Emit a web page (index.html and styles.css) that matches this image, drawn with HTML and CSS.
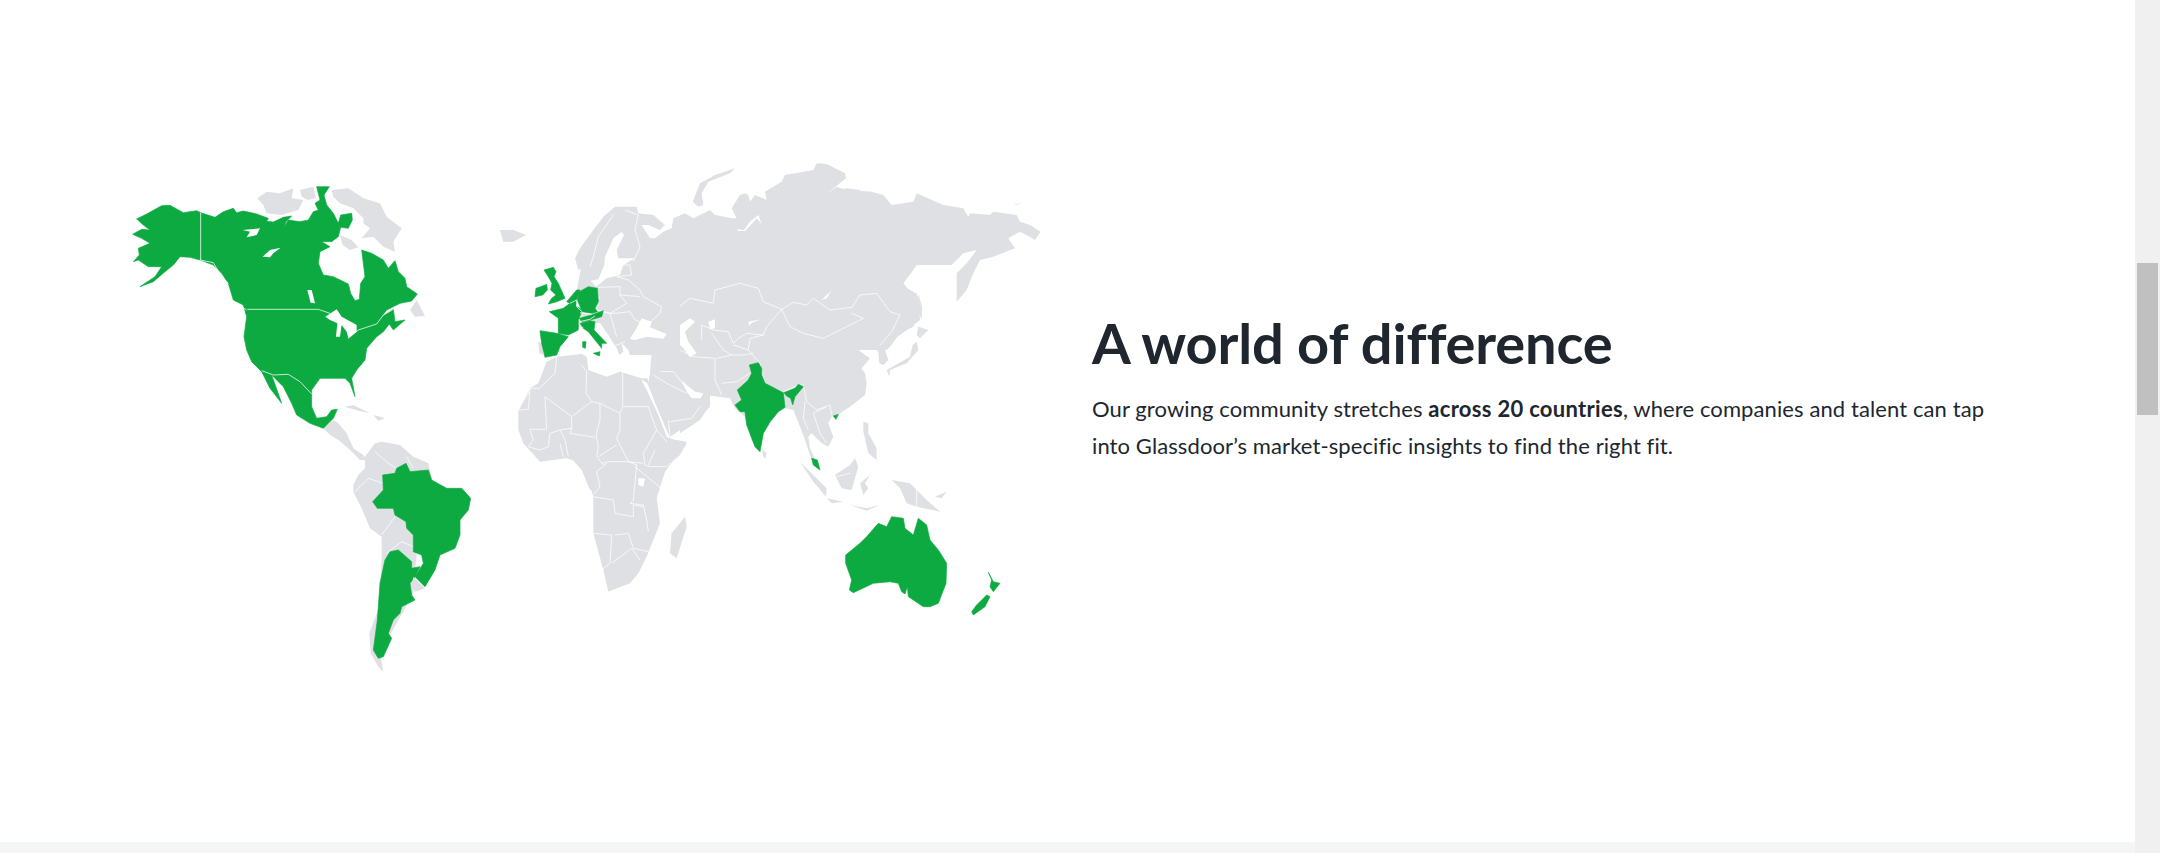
FILE: index.html
```html
<!DOCTYPE html>
<html lang="en">
<head>
<meta charset="utf-8">
<title>A world of difference</title>
<link rel="stylesheet" href="styles.css">
</head>
<body>
<div class="page">
  <main class="content">
    <section class="hero">
      <svg class="map" viewBox="120 150 940 540" role="img" aria-label="World map">
        <!-- Base land -->
        <g transform="translate(100 140) scale(.33333)">
          <path class="land" d="M472 175L500 155 540 160 580 145 575 175 610 180 595 210 545 225 500 220 490 195Z"/>
          <path class="land" d="M600 150L640 140 648 175 625 180 605 170Z"/>
          <path class="land" d="M695 150L745 145 790 175 840 190 860 230 905 265 880 305 885 335 850 320 820 290 785 295 810 265 790 250 790 235 760 205 720 190 700 170Z"/>
          <path class="land" d="M720 285L755 300 775 322 750 330 728 315Z"/>
          <path class="land" d="M930 510L950 480 975 528 945 530Z"/>
          <path class="land" d="M1200 270L1240 270 1278 285 1240 305 1210 305Z"/>
          <path class="land" d="M670 865L700 840 715 850 740 880 760 925 790 945 800 960 780 960 745 925 715 900 690 885Z"/>
          <path class="land" d="M735 800L760 795 810 820 775 812Z"/>
          <path class="land" d="M820 825L855 835 835 842Z"/>
        </g>
        <g transform="translate(560 150) scale(.33333)">
          <path class="land" d="M45 325L60 295 100 240 130 200 165 170 230 170 235 190 280 195 315 225 300 240 265 225 245 225 270 265 285 265 310 245 335 235 340 205 375 190 400 205 450 180 465 195 515 205 530 205 515 175 540 135 555 130 565 135 570 155 585 135 620 150 615 125 665 95 675 75 760 60 770 40 800 42 855 70 855 85 800 130 860 115 900 120V500H60L75 410 70 378 85 375 100 395 88 345 55 360Z"/>
          <path class="land" d="M398 155L420 100 465 75 525 55 510 70 445 95 425 130 430 165 415 170Z"/>
        </g>
        <g transform="translate(820 150) scale(.33333)">
          <path class="land" d="M0 40L20 45 75 70 78 85 15 135 50 110 80 120 155 125 190 135 215 165 280 155 290 130 370 165 430 175 445 200 450 190 510 195 520 185 590 195 600 215 630 225 662 245 645 270 620 255 600 245 565 265 585 295 520 320 480 330 460 370 440 420 410 455 410 370 440 340 470 300 430 310 395 345 370 345 290 345 250 400 270 425 290 430 300 490 280 530 240 550 210 590 200 600H0Z"/>
          <path class="land" d="M295 430L306 470 305 510 297 490Z"/>
          <path class="land" d="M580 165L605 158 590 165Z"/>
        </g>
        <g transform="translate(680 270) scale(.33333)">
          <path class="land" d="M0 0H700L665 45 700 65 715 80 720 150 660 195 630 215 615 240 625 270 610 285 598 280 595 245 565 215 530 235 555 255 570 265 545 295 555 310 560 340 555 375 510 410 480 430 455 440 445 460 460 500 445 530 425 520 395 490 385 500 390 535 415 590 395 570 375 510 360 470 340 420 315 415 295 425 265 470 250 490 235 545 215 510 195 440 165 415 150 385 75 375 90 405 60 450 0 490Z"/>
          <path class="land" d="M715 170L745 180 720 205 710 195Z"/>
          <path class="land" d="M710 215L715 240 680 280 630 300 628 320 620 300 690 260 698 225Z"/>
        </g>
        <g transform="translate(520 240) scale(.33333)">
          <path class="land" d="M200 0H480V345L470 338 400 345 330 345 325 330 305 310 310 335 298 345 290 325 265 285 240 250 190 250 170 150Z"/>
          <path class="land" d="M55 305L68 310 70 345 58 340Z"/>
        </g>
        <g transform="translate(510 350) scale(.33333)">
          <path class="land" d="M110 35L140 20 215 12 230 20 235 60 290 80 330 65 395 85 412 85 440 170 480 265 530 280 510 315 480 340 445 365 420 420H240L215 360 180 320 130 325 90 335 40 280 25 240 25 180 60 115 85 100Z"/>
          <path class="land" d="M425 5L630 0V130L600 135 600 170 570 200 480 260 470 260 445 190 415 100 420 70Z"/>
        </g>
        <g transform="translate(300 420) scale(.33333)">
          <path class="land" d="M720 125L800 115 850 130 860 165 880 230 880 340 910 450 925 515 990 490 1015 460 1040 410 1080 310 1070 235 1095 155 1160 65 1130 60 1000 60 800 60Z"/>
          <path class="land" d="M1155 290L1160 320 1130 415 1110 400 1115 340Z"/>
          <path class="land" d="M160 195L175 165 195 145 195 110 225 70 245 65 300 75 340 110 385 130 395 175 350 400 340 520 240 700 250 755 235 740 212 700 208 640 238 560 245 420 245 350 210 325 185 265 160 215Z"/>
        </g>
        <g transform="translate(700 400) scale(.33333)">
          <path class="land" d="M188 148L200 160 195 177 188 165Z"/>
          <path class="land" d="M300 185L330 215 380 265 378 290 340 245Z"/>
          <path class="land" d="M405 225L450 195 465 175 475 200 455 270 425 265Z"/>
          <path class="land" d="M380 295L430 305 395 310Z"/>
          <path class="land" d="M480 250L510 225 495 250 505 265 490 285Z"/>
          <path class="land" d="M575 240L630 250 680 300 720 335 650 320 620 310 600 265Z"/>
          <path class="land" d="M490 65L505 70 505 100 530 145 530 180 505 160 490 95Z"/>
          <path class="land" d="M450 315L500 325 540 315 500 332Z"/>
          <path class="land" d="M705 290L740 275 725 295Z"/>
        </g>

        <!-- Seas and lakes -->
        <g transform="translate(560 150) scale(.33333)">
          <path class="water" d="M133 345L135 320 160 265 185 245 192 255 170 300 175 325 225 325 190 345 180 375 140 385 108 410 92 392 115 388Z"/>
          <path class="water" d="M530 238L552 240 570 215 595 195 605 222 590 205 572 225 555 243 535 243Z"/>
        </g>
        <g transform="translate(520 240) scale(.33333)">
          <path class="water" d="M330 296L350 265 365 235 395 245 390 262 440 282 430 296 380 290 345 300Z"/>
        </g>
        <g transform="translate(680 270) scale(.33333)">
          <path class="water" d="M0 165L30 145 45 155 15 185 25 215 50 250 30 262 10 235 0 225Z"/>
          <path class="water" d="M85 155L105 148 105 175 90 178Z"/>
          <path class="water" d="M205 155L245 148 215 158 208 168Z"/>
          <path class="water" d="M470 35L440 85 425 90 455 60Z"/>
        </g>
        <g transform="translate(510 350) scale(.33333)">
          <path class="water" d="M393 88L412 100 440 170 480 265 470 260 445 195 415 130Z"/>
          <path class="water" d="M515 90L530 105 555 125 580 130 572 145 545 145 530 125Z"/>
        </g>
        <g transform="translate(300 420) scale(.33333)">
          <path class="water" d="M1015 175L1035 175 1030 200 1015 195Z"/>
        </g>

        <!-- Borders -->
        <g transform="translate(560 150) scale(.33333)">
          <path class="line" d="M160 195L115 260 100 320 90 350M195 180L235 195 225 240 240 290 220 335M180 345L210 345 215 375 170 380 205 390 240 420 250 440 305 470 300 490 260 525 225 510M115 412L180 410 180 435 200 460 150 490 110 480 110 455 120 440M180 435L240 440M110 480L150 490 165 490 210 485 225 510M150 490L170 560M120 520L160 590 195 575"/>
        </g>
        <g transform="translate(680 270) scale(.33333)">
          <path class="line" d="M0 108L30 85 100 100 105 60 180 40 235 55 250 95 305 118 340 97 380 105 400 85 450 120 515 112 540 75 590 70 630 125 660 135 635 185 600 225"/>
          <path class="line" d="M305 118L330 170 370 190 430 205 480 180 550 145 515 130M305 118L260 170 250 195 210 205 205 240 160 225M205 240L240 280 255 345 310 365 355 345 370 345 380 395 410 420 450 405 455 435"/>
          <path class="line" d="M65 210V165L100 180 145 185 160 220 175 205 200 190 250 195M95 190L130 240 155 255M105 265V330L125 375M110 265L155 255 190 255 220 250M125 340L170 335 210 310M0 240L40 260 105 265M375 395L370 445 385 480M400 430L440 410M400 430L420 490 440 520"/>
        </g>
        <g transform="translate(510 350) scale(.33333)">
          <path class="line" d="M85 115H60L55 130 25 180 55 178 60 115M85 118L135 70 140 20M215 45L230 65 228 130 245 155 185 200 105 140 110 238H60M245 155L270 160 330 190 338 170H415M338 65V170M330 190V240L320 265 355 335 400 340M270 160V210L258 255 265 290 260 320 280 345M185 200V235L150 240 120 250 115 290 90 300M185 235L180 250 255 262M150 240L165 270 175 320M150 280L160 320M415 170L430 215 440 240 400 310 405 345 420 350H470L480 340M440 240L470 275M320 285L265 320M60 238L70 270 55 290 90 300M430 75L470 100 530 130M450 65H490L510 90 525 110M475 210L480 260M480 215L545 205 570 170"/>
        </g>
        <g transform="translate(300 420) scale(.33333)">
          <path class="line" d="M880 230L940 240 945 280 1000 290 1000 255 1030 260M880 340L935 345 930 430 905 450M945 345L985 340 1000 385 1045 395M1010 135L1000 240 990 250 1030 255 1040 300 1045 335M1005 140L1090 210M905 130L925 125H985L1010 135M920 130L890 155 900 200 880 225M1065 90L1045 135M935 430L995 385 1020 420"/>
          <path class="line" d="M225 95L265 130 290 145M320 110L340 145M165 215L205 175 250 190M245 345L285 290M260 400L305 365 340 380"/>
        </g>
        <g transform="translate(700 400) scale(.33333)">
          <path class="line" d="M650 265V320M410 230L450 220"/>
        </g>

        <!-- Green countries -->
        <g transform="translate(100 140) scale(.33333)">
          <path class="green" d="M110 237L140 222 185 197 210 196 250 218 290 212 302 218 345 232 370 215 400 205 410 218 430 213 470 222 505 235 500 244 520 246 550 232 575 228 558 245 552 262 565 240 600 245 625 240 640 215 655 210 645 190 660 180 650 140 688 140 672 165 680 195 700 220 715 250 722 225 755 220 757 240 745 265 722 262 715 290 695 305 665 305 690 320 660 335 655 370 670 405 700 410 745 432 752 460 765 482 778 478 782 430 795 410 785 330 815 340 850 360 865 385 885 362 895 395 915 415 920 440 952 462 935 483 900 490 860 510 845 530 880 508 885 545 915 540 880 570 868 552 850 575 830 590 800 625 795 660 770 690 755 715 765 770 750 730 735 715 705 715 660 715 635 750 635 800 650 835 680 830 695 810 712 808 700 835 685 850 670 865 630 850 590 825 575 790 550 740 515 705 545 790 510 745 485 695 455 665 440 630 432 590 440 530 430 495 400 480 385 430 365 400 340 375 300 360 270 352 240 350 220 375 195 395 160 425 120 440 165 410 185 380 145 380 115 360 100 365 118 345 115 325 150 310 125 295 98 283 125 268 150 270 130 255Z"/>
          <path class="water" d="M428 270L480 265 470 285 440 292 450 275Z"/>
          <path class="water" d="M488 350L510 330 542 323 520 340 510 352Z"/>
          <path class="water" d="M622 450L635 450 645 490 632 488Z"/>
          <path class="water" d="M676 530L710 508 725 530 770 555 770 575 745 595 740 575 725 555 720 590 708 590 712 550 690 540Z"/>
          <path class="line" d="M302 218V360M442 508H655L690 520M745 595L775 570 830 552 850 525 880 508M485 692L520 705 565 703 600 725 635 762"/>
          <path class="line" d="M300 360L340 368 365 410 385 430M402 488L440 510"/>
        </g>
        <g transform="translate(520 240) scale(.33333)">
          <path class="green" d="M72 90L100 82 108 95 102 110 115 130 135 175 110 185 85 192 95 175 108 165 92 150 96 130 85 110Z"/>
          <path class="green" d="M48 145L62 140 80 133 82 150 68 165 45 170Z"/>
          <path class="green" d="M140 185L170 150 180 150 170 180 168 200 150 190Z"/>
          <path class="green" d="M88 215L130 205 150 190 180 205 185 215 175 240 175 270 145 285 115 280 115 235Z"/>
          <path class="green" d="M60 272L110 280 145 290 120 320 110 345 75 352 65 310Z"/>
          <path class="green" d="M172 180L178 155 205 140 232 145 235 185 225 205 232 215 215 220 187 215Z"/>
          <path class="green" d="M178 235L215 225 250 212 245 230 210 240 185 245Z"/>
          <path class="green" d="M180 250L210 242 225 245 222 270 260 310 245 310 245 325 205 275 190 265Z"/>
          <path class="green" d="M220 340L240 335 238 348Z"/>
          <path class="green" d="M188 305L198 305 196 325 188 322Z"/>
          <path class="line" d="M170 180L150 190M170 180L170 200 185 215M180 218L215 222M178 245L210 238 225 228M175 270L190 262"/>
        </g>
        <g transform="translate(680 270) scale(.33333)">
          <path class="green" d="M235 278L245 295 245 315 255 340 310 368 315 412 295 425 270 455 250 490 240 545 225 530 200 465 195 425 180 425 165 405 185 390 172 360 205 330 215 310 208 285Z"/>
          <path class="green" d="M312 368L345 355 355 343 370 350 345 380 338 405 332 385 320 378Z"/>
          <path class="green" d="M460 438L475 433 468 448Z"/>
          <path class="green" d="M395 565L412 570 420 600 400 585Z"/>
        </g>
        <g transform="translate(300 420) scale(.33333)">
          <path class="green" d="M218 245L250 210 248 165 285 160 290 145 318 130 330 155 385 150 395 180 440 205 485 205 512 235 505 270 480 300 480 345 465 385 420 405 405 450 375 500 345 470 370 430 365 405 340 395 340 345 320 325 318 305 285 285 280 265 245 265 232 265Z"/>
          <path class="green" d="M270 395L295 390 335 425 335 445 360 440 345 470 330 490 335 525 345 540 305 560 300 580 280 600 265 640 275 655 250 710 235 715 220 690 232 600 240 490 255 420Z"/>
          <path class="land" d="M340 470L375 505 345 515 335 500Z"/>
        </g>
        <g transform="translate(700 400) scale(.33333)">
          <path class="green" d="M437 465L480 430 500 410 535 370 560 380 575 350 610 355 615 385 640 405 655 355 680 375 690 420 715 450 740 490 738 550 715 610 690 620 670 620 640 600 625 590 622 560 615 582 605 575 595 550 570 545 520 550 460 578 448 570 455 540 437 490Z"/>
          <path class="green" d="M865 517L880 545 900 550 880 575 870 560 875 540Z"/>
          <path class="green" d="M815 635L830 615 860 585 870 590 855 620 820 645Z"/>
        </g>
      </svg>
      <div class="copy">
        <h1 class="title">A world of difference</h1>
        <p class="lead">Our growing community stretches <strong>across 20 countries</strong>, where companies and talent can tap into Glassdoor’s market-specific insights to find the right fit.</p>
      </div>
    </section>
    <div class="band"></div>
  </main>
  <aside class="scrollbar"><div class="thumb"></div></aside>
</div>
</body>
</html>
```
FILE: styles.css
```css
html, body {
  margin: 0;
  height: 100%;
  overflow: hidden;
  background: #fff;
}
.page {
  display: flex;
  height: 853px;
}
.content {
  flex: 1;
  display: flex;
  flex-direction: column;
  min-width: 0;
}
.hero {
  height: 842px;
  display: flex;
  align-items: flex-start;
  padding-left: 120px;
  padding-top: 150px;
  box-sizing: border-box;
}
.map {
  width: 940px;
  height: 540px;
  flex: none;
}
.land { fill: #dee0e3; }
.green {
  fill: #0caa41;
  stroke: #0caa41;
  stroke-width: 2;
  stroke-linejoin: round;
}
.water { fill: #fff; }
.line {
  fill: none;
  stroke: #fff;
  stroke-width: 1px;
  stroke-opacity: .75;
  vector-effect: non-scaling-stroke;
}
.copy {
  margin-left: 32px;
  margin-top: 161px;
  width: 905px;
  font-family: Lato, sans-serif;
  font-variant-ligatures: none;
}
.title {
  margin: 0 0 15px;
  font-size: 56px;
  line-height: 64px;
  font-weight: 700;
  letter-spacing: -.15px;
  color: #20262e;
}
.lead {
  margin: 0;
  font-size: 22px;
  line-height: 37px;
  letter-spacing: .1px;
  color: #20262e;
}
.lead strong {
  font-weight: 700;
  letter-spacing: .3px;
}
.band {
  height: 11px;
  background: #f4f5f6;
}
.scrollbar {
  width: 25px;
  background: #f0f0f0;
  padding: 263px 2px 0;
  box-sizing: border-box;
}
.thumb {
  height: 152px;
  background: #c0c0c0;
}
```
